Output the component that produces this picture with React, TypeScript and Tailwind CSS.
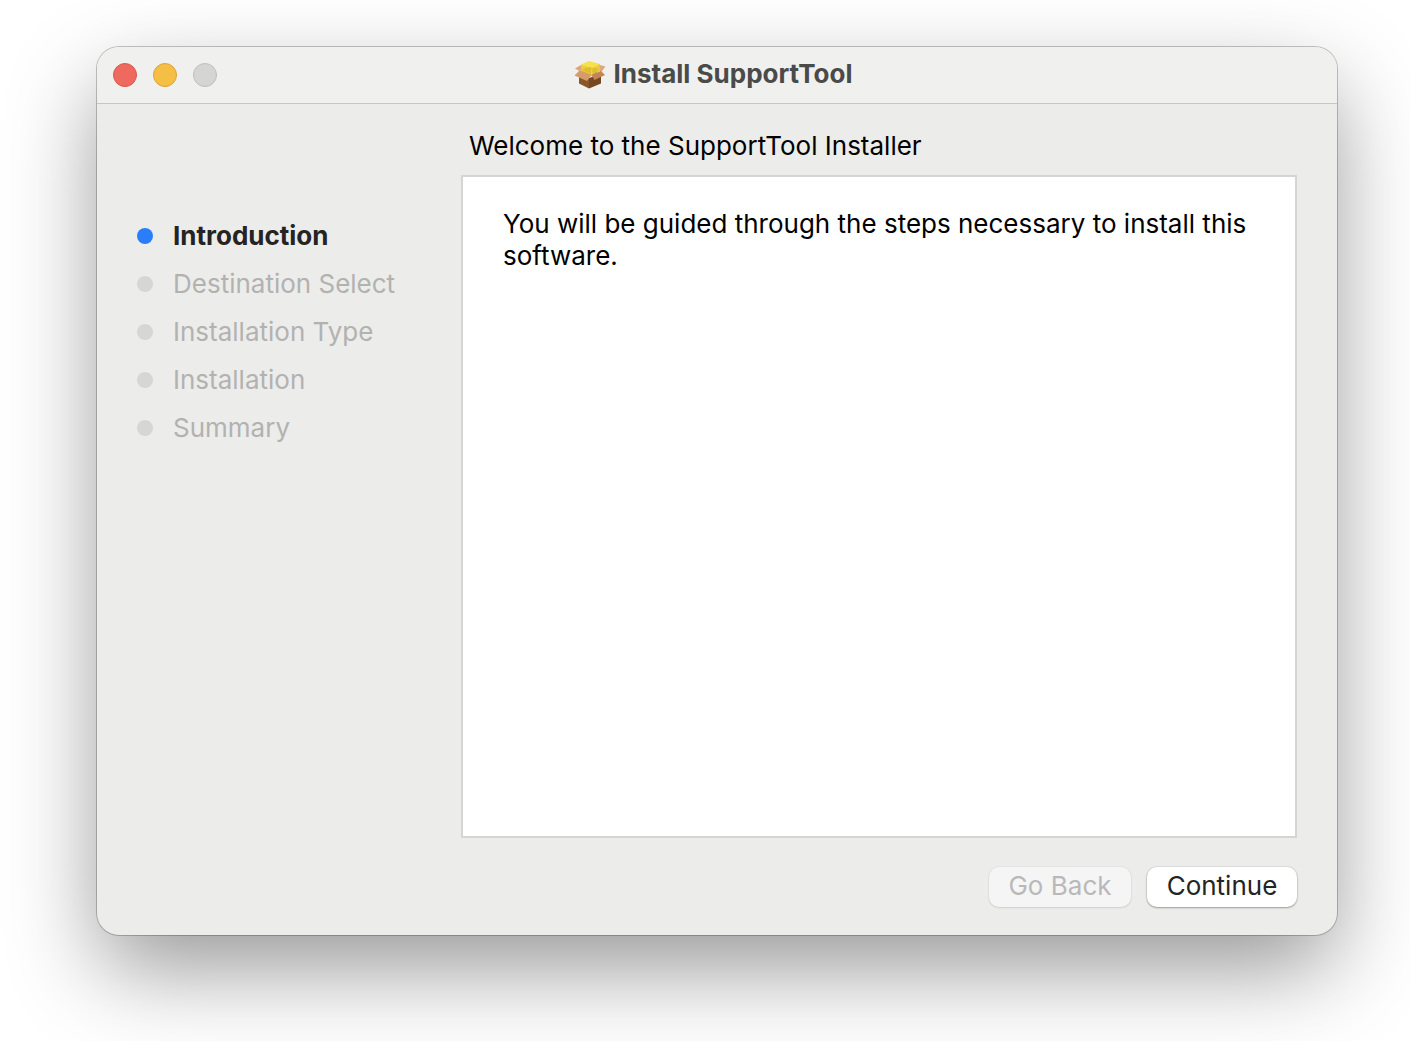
const steps = [
  "Introduction",
  "Destination Select",
  "Installation Type",
  "Installation",
  "Summary",
];

function PackageIcon() {
  return (
    <svg className="h-8 w-8 shrink-0" viewBox="0 0 32 32" aria-hidden="true">
      <path d="M5 15l10 5v10.500L5 25.500z" fill="#8a5528" />
      <path d="M15 20l12-4v9.500l-12 5z" fill="#764720" />
      <path d="M6 13l9-6 12 4-8 7z" fill="#b57c48" />
      <path d="M1 10.500l6-3.500 1 5-2.500 1z" fill="#dba577" />
      <path d="M24 6.500l7.500 2-4.500 6-3-2z" fill="#e0a87a" />
      <path d="M5.500 12.500l12 4.500-4.500 6L.500 17.500z" fill="#d79b69" />
      <path d="M17.500 17L27 13l4 4-10.500 5z" fill="#c38553" />
      <path d="M7 6.500v6.500l10.500 4L26 12.500V6z" fill="#e8cb3a" fillOpacity="0.92" />
      <path d="M7 6.500L15 3l11 3-8 4.500z" fill="#f6e14a" />
      <path d="M9 12l7-3 8 2.500-6 4z" fill="#dcb928" fillOpacity="0.7" />
      <path d="M17.800 10.500v6" stroke="#f8e868" strokeWidth="0.7" />
    </svg>
  );
}

function TitleBar() {
  return (
    <header className="grid h-[57px] shrink-0 grid-cols-[1fr_auto_1fr] items-center rounded-t-[22px] border-b border-[#c6c6c5] bg-[#f0f0ee] px-4">
      <div className="flex gap-4">
        <button type="button" aria-label="Close" className="h-6 w-6 rounded-full border border-[#d8584b] bg-[#ee6a5e]" />
        <button type="button" aria-label="Minimize" className="h-6 w-6 rounded-full border border-[#dca236] bg-[#f5bf45]" />
        <button type="button" aria-label="Zoom" disabled className="h-6 w-6 rounded-full border border-[#bebebd] bg-[#d5d5d3]" />
      </div>
      <h1 className="flex items-center gap-2 pr-2 pb-0.5 font-bold text-[#4a4a49]">
        <PackageIcon />
        Install SupportTool
      </h1>
    </header>
  );
}

function StepList() {
  return (
    <nav aria-label="Installer steps" className="w-[364px] shrink-0 pt-[108px] pl-10">
      <ol>
        {steps.map((step, i) => (
          <li
            key={step}
            aria-current={i === 0 ? "step" : undefined}
            className={`flex h-12 items-center gap-5 ${i === 0 ? "font-bold text-[#242424]" : "text-[#b2b2b1]"}`}
          >
            <span className={`h-4 w-4 rounded-full ${i === 0 ? "bg-[#2a7efb]" : "bg-[#d6d6d5]"}`} />
            {step}
          </li>
        ))}
      </ol>
    </nav>
  );
}

export default function App() {
  return (
    <div className="flex min-h-screen bg-white pt-[47px] pr-[73px] pb-[106px] pl-[97px] font-['Inter',sans-serif] text-[26px] leading-8 text-black">
      <main className="flex flex-1 flex-col rounded-[22px] bg-[#ececea] shadow-[0_0_0_1px_rgba(0,0,0,0.22),0_36px_92px_-4px_rgba(0,0,0,0.42)]">
        <TitleBar />
        <div className="flex flex-1">
          <StepList />
          <section className="flex min-w-0 flex-1 flex-col pt-[26px] pr-10 pb-7">
            <h2 className="pl-2">Welcome to the SupportTool Installer</h2>
            <div className="mt-[13px] flex-1 border-2 border-[#d5d5d4] bg-white pt-[31px] pr-2 pl-10">
              <p>You will be guided through the steps necessary to install this software.</p>
            </div>
            <div className="mt-[29px] flex justify-end gap-4">
              <button
                type="button"
                disabled
                className="h-10 w-[142px] rounded-[10px] bg-[#f5f5f5] pb-0.5 text-[#b9b9b9] shadow-[0_0_1px_1px_rgba(0,0,0,0.03),0_1px_2px_rgba(0,0,0,0.1)]"
              >
                Go Back
              </button>
              <button
                type="button"
                className="h-10 w-[150px] rounded-[10px] bg-white pb-0.5 text-[#242424] shadow-[0_0_1px_1px_rgba(0,0,0,0.06),0_1px_2px_rgba(0,0,0,0.3)]"
              >
                Continue
              </button>
            </div>
          </section>
        </div>
      </main>
    </div>
  );
}
